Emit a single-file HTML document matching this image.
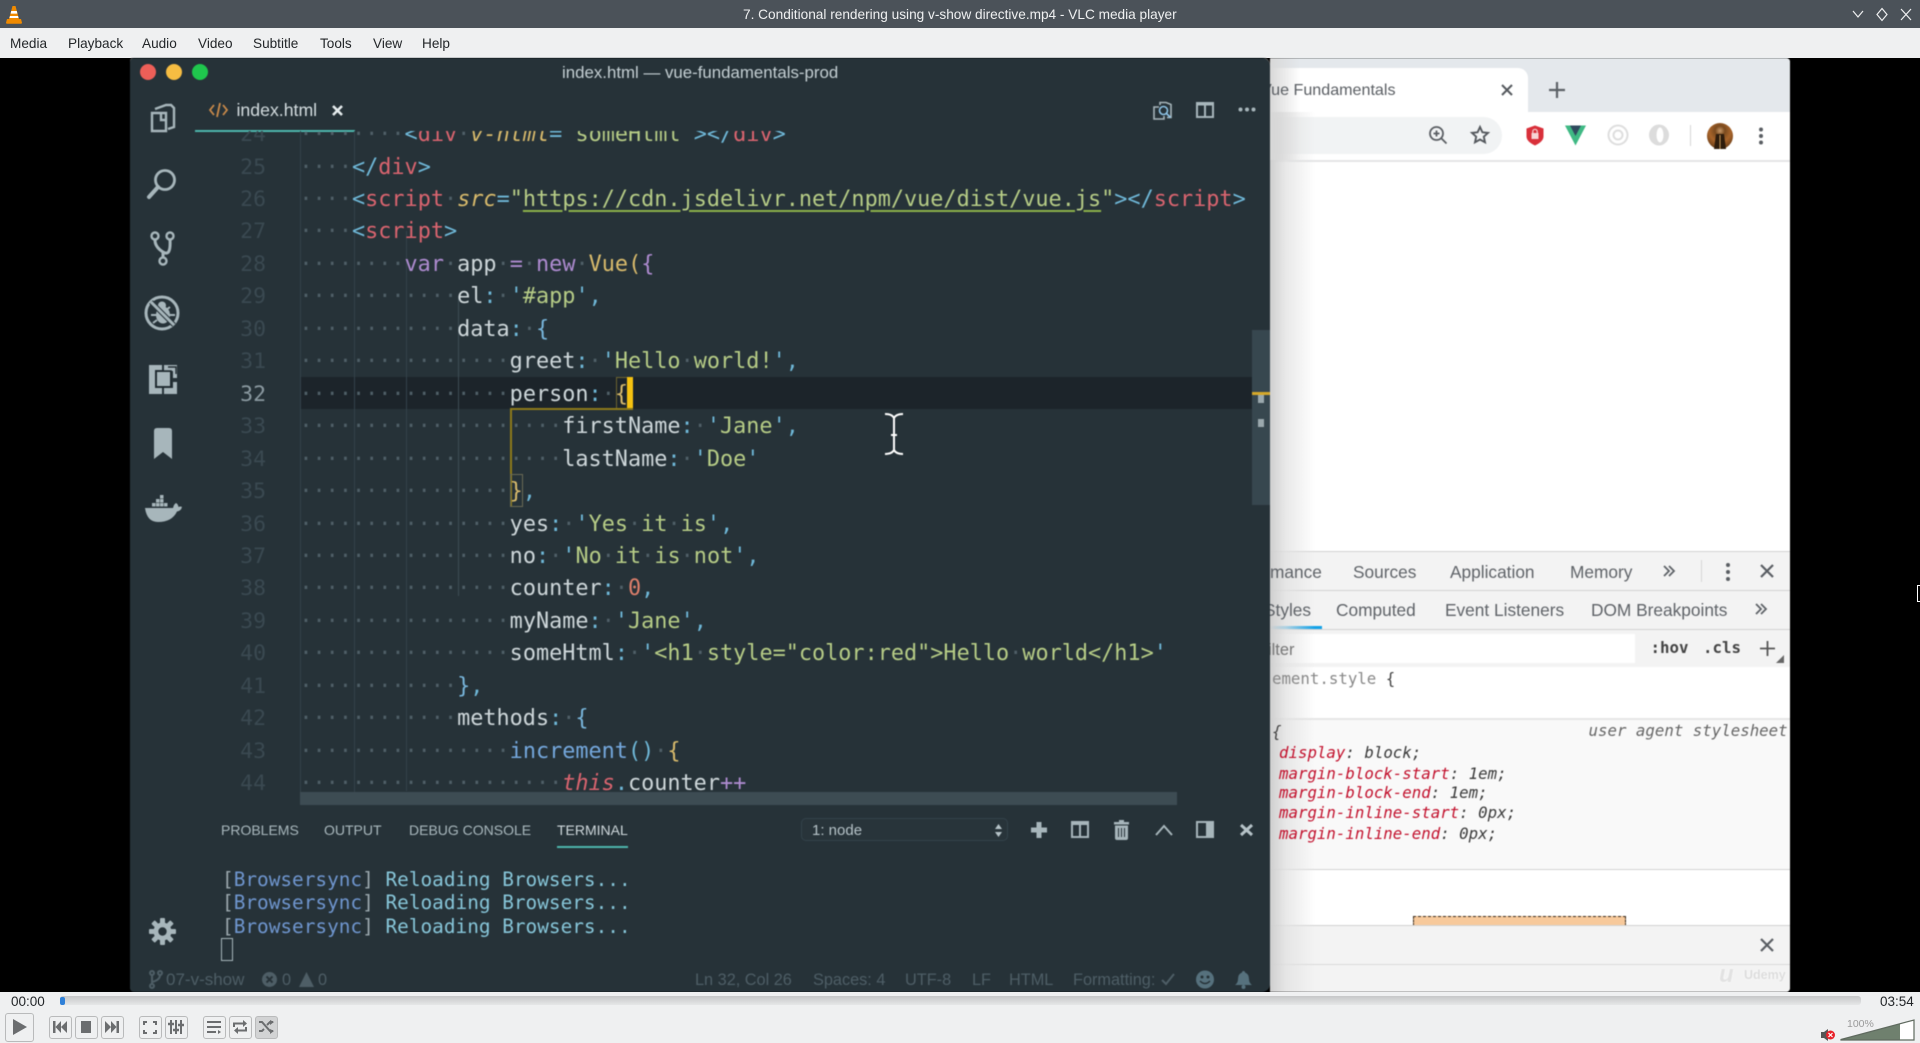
<!DOCTYPE html>
<html lang="en"><head><meta charset="utf-8"><title>VLC</title>
<style>
html,body{margin:0;padding:0;width:1920px;height:1043px;overflow:hidden;background:#000}
*{box-sizing:border-box}
.a{position:absolute}
.t{position:absolute;white-space:nowrap;line-height:20px;font-family:"Liberation Sans",sans-serif}
svg{position:absolute;overflow:visible}
#blur{position:absolute;left:130px;top:58px;width:1660px;height:934px;overflow:hidden;filter:blur(.45px)}
#code{position:absolute;left:169.4px;top:-11.9px;margin:0;font:21.84px/32.45px "DejaVu Sans Mono",monospace;color:#ced7da;white-space:pre}
#nums{position:absolute;left:61px;width:75px;top:-11.9px;margin:0;font:21.48px/32.45px "DejaVu Sans Mono",monospace;color:#3a4951;text-align:right;white-space:pre}
#code i{font-style:normal;color:#4f5f67}
.p{color:#6fb8d8}.n{color:#d9646f}.s{color:#b6cc86}.y{color:#d9bb6c}.k{color:#ae8bd0}.f{color:#74a7dc}.b{color:#78b6dc}.o{color:#de7f6b}
.it{font-style:italic}
.d{font-family:"DejaVu Sans Mono",monospace;font-style:italic;font-size:15.75px;line-height:20px;position:absolute;white-space:pre;color:#3a3a3a}
.d b{font-weight:normal;color:#c2102c}
.btn{position:absolute;top:1016px;width:23px;height:23px;border:1px solid #b9babb;border-radius:3px;background:#eff0f1}
.m{font-size:13.6px;color:#232629;top:34px}
.st{font-size:16.3px;color:#4e5e66;top:969.5px}
.dv{font-size:17.3px;color:#5f6368}
.tb{font-size:14px;color:#a9b8bd;top:820px}
</style></head>
<body>
<!-- VLC chrome -->
<div class="a" style="left:0;top:0;width:1920px;height:28px;background:#4b5259"></div>
<svg style="left:5px;top:5px" width="18" height="20" viewBox="0 0 18 20"><path d="M7.5 1h3l3.5 13h-10z" fill="#f08a00"/><path d="M6.2 6h5.6l.6 2.6H5.600zM5 11h8l.6 2H4.400z" fill="#fff"/><path d="M2 14h14l1 3.800q0 1-1 1H2q-1 0-1-1z" fill="#f08a00"/></svg>
<div class="t" style="left:743px;top:4.5px;font-size:13.65px;color:#eff0f1">7. Conditional rendering using v-show directive.mp4 - VLC media player</div>
<svg style="left:1850px;top:6px" width="66" height="17" viewBox="0 0 66 17" fill="none" stroke="#eff0f1" stroke-width="1.200"><path d="M3 5l5 6 5-6"/><path d="M32 2.500l5 6-5 6-5-6z"/><path d="M51 3l10 11M61 3L51 14"/></svg>
<div class="a" style="left:0;top:28px;width:1920px;height:30px;background:#eff0f1"></div>
<div class="t m" style="left:10px">Media</div><div class="t m" style="left:68px">Playback</div><div class="t m" style="left:142px">Audio</div><div class="t m" style="left:198px">Video</div><div class="t m" style="left:253px">Subtitle</div><div class="t m" style="left:320px">Tools</div><div class="t m" style="left:373px">View</div><div class="t m" style="left:422px">Help</div>

<!-- Video area -->
<div id="blur"><div class="a" style="left:-130px;top:-58px;width:1920px;height:1043px">

<!-- Browser -->
<div class="a" style="left:1270px;top:58px;width:520px;height:934px;background:#fff;border-radius:0 4px 4px 0;overflow:hidden">
 <div class="a" style="left:0;top:0;width:520px;height:54px;background:#e4e8ec"></div>
 <div class="a" style="left:-20px;top:10px;width:278px;height:44px;background:#fff;border-radius:10px 10px 0 0"></div>
 <div class="a" style="left:0;top:102px;width:520px;height:2px;background:#e4e5e6"></div>
 <div class="a" style="left:-30px;top:59px;width:262px;height:37px;background:#f1f3f4;border-radius:19px"></div>
 <div class="a" style="left:0;top:494px;width:520px;height:78px;background:#f3f3f3"></div>
 <div class="a" style="left:0;top:493px;width:520px;height:1px;background:#d2d2d2"></div>
 <div class="a" style="left:0;top:532px;width:520px;height:1px;background:#d2d2d2"></div>
 <div class="a" style="left:0;top:571px;width:520px;height:1px;background:#d2d2d2"></div>
 <div class="a" style="left:0;top:568px;width:52px;height:3px;background:#12a2e8"></div>
 <div class="a" style="left:0;top:572px;width:520px;height:37px;background:#f3f3f3"></div>
 <div class="a" style="left:0;top:576px;width:365px;height:29px;background:#fff"></div>
 <div class="a" style="left:0;top:660px;width:520px;height:2px;background:#e6e6e6"></div>
 <div class="a" style="left:0;top:662px;width:520px;height:149px;background:#f9f9f9"></div>
 <div class="a" style="left:0;top:811px;width:520px;height:1px;background:#d4d4d4"></div>
 <div class="a" style="left:143px;top:858px;width:213px;height:10px;background:#f7c99b;border:1px dashed #3a2a1a;border-bottom:0"></div>
 <div class="a" style="left:0;top:867px;width:520px;height:67px;background:#f3f3f3"></div>
 <div class="a" style="left:0;top:867px;width:520px;height:1px;background:#d2d2d2"></div>
 <div class="a" style="left:0;top:906px;width:520px;height:1px;background:#d9d9d9"></div>
 <div class="a" style="left:0;top:54px;width:45px;height:880px;background:linear-gradient(90deg,#cfcfcf 0,rgba(225,225,225,.75) 35%,rgba(255,255,255,0) 100%)"></div>
 <div class="a" style="left:0;top:0;width:30px;height:102px;background:linear-gradient(90deg,#d8d8d8,rgba(255,255,255,0))"></div>
</div>

<div class="t" style="left:1261px;top:80px;font-size:16.1px;color:#5a5e63;clip-path:inset(0 0 0 9px)">Vue Fundamentals</div>
<svg style="left:1500px;top:83px" width="14" height="14" fill="none" stroke="#55595e" stroke-width="2"><path d="M2 2l10 10M12 2L2 12"/></svg>
<svg style="left:1549px;top:82px" width="16" height="16" fill="none" stroke="#5c6166" stroke-width="2.200"><path d="M8 0v16M0 8h16"/></svg>
<svg style="left:1428px;top:125px" width="20" height="20" fill="none" stroke="#5a5e63" stroke-width="1.800"><circle cx="8.500" cy="8.500" r="6.500"/><path d="M13.500 13.500l5 5M8.500 5.500v6M5.500 8.500h6"/></svg>
<svg style="left:1470px;top:125px" width="20" height="20" fill="none" stroke="#55595e" stroke-width="1.900"><path d="M10 2l2.400 5.300 5.600.6-4.200 3.800 1.200 5.600L10 14.500l-5 2.800 1.200-5.600L2 7.900l5.600-.6z"/></svg>
<svg style="left:1526px;top:125px" width="18" height="21"><path d="M9 .5l8.500 3v8q0 5-8.500 9-8.500-4-8.500-9v-8z" fill="#d9303a"/><rect x="5.500" y="8" width="7" height="6" fill="#f6d5d5"/><path d="M6.800 8V6.500a2.200 2.200 0 014.400 0V8" fill="none" stroke="#f6d5d5" stroke-width="1.200"/></svg>
<svg style="left:1565px;top:125px" width="22" height="21"><path d="M0 .5h21L10.500 20.500z" fill="#3fb984"/><path d="M5 .5h11l-5.500 10.500z" fill="#2f4a5e"/></svg>
<svg style="left:1607px;top:123px" width="22" height="23" fill="none" stroke="#dedede" stroke-width="2"><circle cx="11" cy="12" r="9.500"/><circle cx="11" cy="12" r="4.500"/></svg>
<svg style="left:1648px;top:123px" width="22" height="23"><ellipse cx="11" cy="12" rx="10" ry="10.500" fill="#dcdcdc"/><ellipse cx="12" cy="12" rx="3.500" ry="7.500" fill="#fff"/></svg>
<div class="a" style="left:1690px;top:125px;width:1px;height:21px;background:#d6d6d6"></div>
<div class="a" style="left:1707px;top:123px;width:26px;height:26px;border-radius:50%;background:radial-gradient(circle at 50% 30%,#c89a6a 0,#7a4a1e 22%,#a8642a 48%,#4a2a0e 100%)"></div>
<svg style="left:1711px;top:134px" width="18" height="15"><path d="M5 0h8l2 15H3z" fill="#2e1c0c"/><path d="M9 1v14" stroke="#c89a5a" stroke-width="1"/></svg>
<svg style="left:1758px;top:127px" width="6" height="18" fill="#5a5e63"><circle cx="3" cy="2.500" r="2"/><circle cx="3" cy="9" r="2"/><circle cx="3" cy="15.500" r="2"/></svg>

<!-- devtools text -->
<div class="t dv" style="left:1270px;top:562px">mance</div>
<div class="t dv" style="left:1353px;top:562px">Sources</div><div class="t dv" style="left:1450px;top:562px">Application</div><div class="t dv" style="left:1570px;top:562px">Memory</div>
<svg style="left:1663px;top:565px" width="12" height="12" fill="none" stroke="#5f6368" stroke-width="1.800"><path d="M1 1l5 5-5 5M6 1l5 5-5 5"/></svg>
<div class="a" style="left:1701px;top:560px;width:1px;height:22px;background:#d6d6d6"></div>
<svg style="left:1725px;top:562px" width="6" height="20" fill="#5a5e63"><circle cx="3" cy="3" r="2"/><circle cx="3" cy="10" r="2"/><circle cx="3" cy="17" r="2"/></svg>
<svg style="left:1760px;top:564px" width="14" height="14" fill="none" stroke="#5a5e63" stroke-width="2.200"><path d="M1 1l12 12M13 1L1 13"/></svg>
<div class="t dv" style="left:1264px;top:600px;clip-path:inset(0 0 0 6px)">Styles</div><div class="t dv" style="left:1336px;top:600px">Computed</div><div class="t dv" style="left:1445px;top:600px">Event Listeners</div><div class="t dv" style="left:1591px;top:600px">DOM Breakpoints</div>
<svg style="left:1755px;top:603px" width="12" height="12" fill="none" stroke="#5f6368" stroke-width="1.800"><path d="M1 1l5 5-5 5M6 1l5 5-5 5"/></svg>
<div class="t" style="left:1258px;top:640px;font-size:16.4px;color:#777;clip-path:inset(0 0 0 12px)">Filter</div>
<div class="t" style="left:1650.5px;top:638px;font-size:15.75px;font-weight:bold;color:#444;font-family:'DejaVu Sans Mono',monospace">:hov</div>
<div class="t" style="left:1703px;top:638px;font-size:15.75px;font-weight:bold;color:#444;font-family:'DejaVu Sans Mono',monospace">.cls</div>
<svg style="left:1760px;top:641px" width="15" height="15" stroke="#555" stroke-width="1.800"><path d="M7.500 0v15M0 7.500h15"/></svg>
<svg style="left:1776px;top:655px" width="8" height="8" fill="#666"><path d="M8 0v8H0z"/></svg>
<div class="d" style="left:1253px;top:669px;font-style:normal;color:#888;clip-path:inset(0 0 0 18px)">element.style <span style="color:#444">{</span></div>
<div class="d" style="left:1272px;top:722px;color:#444">{</div>
<div class="d" style="left:1588.5px;top:721px;color:#666">user agent stylesheet</div>
<div class="d" style="left:1279px;top:743px"><b>display</b>: block;</div>
<div class="d" style="left:1279px;top:764px"><b>margin-block-start</b>: 1em;</div>
<div class="d" style="left:1279px;top:783px"><b>margin-block-end</b>: 1em;</div>
<div class="d" style="left:1279px;top:803px"><b>margin-inline-start</b>: 0px;</div>
<div class="d" style="left:1279px;top:824px"><b>margin-inline-end</b>: 0px;</div>
<svg style="left:1760px;top:938px" width="14" height="14" fill="none" stroke="#5a5e63" stroke-width="2.200"><path d="M1 1l12 12M13 1L1 13"/></svg>
<div class="t" style="left:1719px;top:965px;font-size:24px;font-weight:bold;font-style:italic;color:#e2e2e2;text-shadow:0 0 2px #fff">u</div>
<div class="t" style="left:1744px;top:965px;font-size:12.5px;font-weight:bold;color:#dcdcdc;text-shadow:0 0 2px #fff">Udemy</div>

<!-- VS Code -->
<div class="a" style="left:130px;top:58px;width:1140px;height:934px;background:#263238;border-radius:4px 8px 8px 4px;box-shadow:0 -1px 0 #666"></div>
<div class="a" style="left:140px;top:64px;width:16px;height:16px;border-radius:50%;background:#ed5f58"></div>
<div class="a" style="left:166px;top:64px;width:16px;height:16px;border-radius:50%;background:#f6bd42"></div>
<div class="a" style="left:192px;top:64px;width:16px;height:16px;border-radius:50%;background:#1fc74d"></div>
<div class="t" style="left:562px;top:62.500px;font-size:16.85px;color:#c4cfd3">index.html — vue-fundamentals-prod</div>

<!-- activity icons -->
<svg style="left:150px;top:102px" width="26" height="32" fill="none" stroke="#a7b6bb" stroke-width="2.400"><path d="M2 11h14l0 0v18H2z"/><path d="M5 7l11-4h5l3 3v19l-6 2"/><path d="M11 11v7h6"/></svg>
<svg style="left:147px;top:167px" width="32" height="32" fill="none" stroke="#a7b6bb"><circle cx="18" cy="13" r="9.500" stroke-width="2.800"/><path d="M11 20l-9 10" stroke-width="4" stroke-linecap="round"/></svg>
<svg style="left:150px;top:231px" width="26" height="35" fill="none" stroke="#a7b6bb" stroke-width="2.400"><circle cx="5" cy="5" r="3.500"/><circle cx="20" cy="5" r="3.500"/><circle cx="13" cy="30" r="3.500"/><path d="M5 9q0 7 8 12t7-12M13 21v5" stroke-width="3"/></svg>
<svg style="left:144px;top:295px" width="37" height="37" fill="none" stroke="#a7b6bb"><circle cx="18" cy="18" r="16" stroke-width="3"/><ellipse cx="19" cy="20" rx="7" ry="8.500" fill="#a7b6bb" stroke="none"/><circle cx="18" cy="10.500" r="4" fill="#a7b6bb" stroke="none"/><path d="M10 12l4 3M26 12l-4 3M7 20h5M31 20h-5M9 28l4-3M28 28l-4-3" stroke-width="2"/><path d="M7 7l23 23" stroke="#263238" stroke-width="5"/><path d="M7 7l23 23" stroke-width="3"/></svg>
<svg style="left:149px;top:365px" width="28" height="29"><path d="M0 0h13v5H6v18h7v6H0zM15 0h13v13h-4V6h-6l0 0h-3zM15 23h9v-6h4v12H15z" fill="#a7b6bb"/><rect x="8" y="7" width="13" height="14" fill="#a7b6bb"/><path d="M7 6h15v16H7z" fill="none" stroke="#1f2a2f" stroke-width="1.600"/><path d="M19 2h8v7" fill="none" stroke="#1f2a2f" stroke-width="1.400"/></svg>
<svg style="left:154px;top:428px" width="18" height="32"><path d="M0 3q0-3 3-3h12q3 0 3 3v28l-9-7-9 7z" fill="#a7b6bb"/></svg>
<svg style="left:144px;top:494px" width="38" height="29" fill="#a7b6bb"><path d="M1 14h28q1-4 3-5 2 1 2.500 4 2-1 3.500 0-1 4-5 4.500Q28 28 14 28 3 28 1 14z"/><path d="M8 9h3.500v3.500H8zM12 9h3.500v3.500H12zM16 9h3.500v3.500H16zM12 5h3.500v3.500H12zM16 5h3.500v3.500H16zM16 1h3.500v3.500H16zM20 9h3.500v3.500H20z"/></svg>
<svg style="left:149px;top:918px" width="27" height="27" viewBox="0 0 27 27"><g fill="#a7b6bb"><circle cx="13.500" cy="13.500" r="9"/><rect x="11" y="0" width="5" height="27" rx="1"/><rect x="11" y="0" width="5" height="27" rx="1" transform="rotate(45 13.500 13.500)"/><rect x="11" y="0" width="5" height="27" rx="1" transform="rotate(90 13.500 13.500)"/><rect x="11" y="0" width="5" height="27" rx="1" transform="rotate(135 13.500 13.500)"/></g><circle cx="13.500" cy="13.500" r="4.200" fill="#263238"/></svg>

<!-- tab -->
<svg style="left:209px;top:102px" width="19" height="16" fill="none" stroke="#c98a4a" stroke-width="1.800"><path d="M5 3L1 8l4 5M14 3l4 5-4 5M11 1L8 15"/></svg>
<div class="t" style="left:236.500px;top:100px;font-size:17.700px;color:#d3dcdf">index.html</div>
<svg style="left:332px;top:105px" width="11" height="11" fill="none" stroke="#e6ecee" stroke-width="2.600"><path d="M1 1l9 9M10 1L1 10"/></svg>
<div class="a" style="left:195px;top:130px;width:160px;height:2px;background:#4db6ac"></div>
<svg style="left:1153px;top:101px" width="21" height="19" fill="none" stroke="#a7b6bb" stroke-width="1.600"><path d="M7 4V1.500h6l5 2v13h-4M6 6H1v12h10v-3"/><circle cx="10.500" cy="9.500" r="4" stroke="#8ec4e6"/><path d="M13.500 12.500l4 4" stroke="#8ec4e6"/></svg>
<svg style="left:1196px;top:102px" width="18" height="16" fill="none" stroke="#a7b6bb" stroke-width="2"><rect x="1" y="1" width="16" height="14"/><path d="M9 1v14M1 2.500h16" /></svg>
<svg style="left:1238px;top:107px" width="18" height="5" fill="#a7b6bb"><circle cx="2.500" cy="2.500" r="2"/><circle cx="9" cy="2.500" r="2"/><circle cx="15.500" cy="2.500" r="2"/></svg>

<!-- editor -->
<div class="a" style="left:130px;top:131px;width:1140px;height:661px;overflow:hidden">
 <div class="a" style="left:170px;top:246px;width:952px;height:32px;background:#1c242a"></div>
 <div class="a" style="left:170px;top:0;width:1px;height:661px;background:#33424a"></div>
 <div class="a" style="left:224px;top:0;width:1px;height:100%;background:#33424a"></div>
 <div class="a" style="left:276px;top:100px;width:1px;height:560px;background:#33424a"></div>
 <div class="a" style="left:328px;top:165px;width:1px;height:300px;background:#3d4c54"></div>
 <pre id="nums">24
25
26
27
28
29
30
31
<span style="color:#8b9aa1">32</span>
33
34
35
36
37
38
39
40
41
42
43
44</pre>
 <pre id="code"><i>········</i><span class="p">&lt;</span><span class="n">div</span><i>·</i><span class="y it">v-html</span><span class="p">=</span><span class="s">"someHtml"</span><span class="p">&gt;&lt;/</span><span class="n">div</span><span class="p">&gt;</span>
<i>····</i><span class="p">&lt;/</span><span class="n">div</span><span class="p">&gt;</span>
<i>····</i><span class="p">&lt;</span><span class="n">script</span><i>·</i><span class="y it">src</span><span class="p">=</span><span class="s">"<span style="text-decoration:underline;text-decoration-color:#8bb04a;text-underline-offset:4px;text-decoration-thickness:2px">https://cdn.jsdelivr.net/npm/vue/dist/vue.js</span>"</span><span class="p">&gt;&lt;/</span><span class="n">script</span><span class="p">&gt;</span>
<i>····</i><span class="p">&lt;</span><span class="n">script</span><span class="p">&gt;</span>
<i>········</i><span class="k">var</span><i>·</i>app<i>·</i><span class="k">=</span><i>·</i><span class="k">new</span><i>·</i><span class="y">Vue</span><span class="y">(</span><span class="k">{</span>
<i>············</i>el<span class="p">:</span><i>·</i><span class="p">'</span><span class="s">#app</span><span class="p">',</span>
<i>············</i>data<span class="p">:</span><i>·</i><span class="b">{</span>
<i>················</i>greet<span class="p">:</span><i>·</i><span class="p">'</span><span class="s">Hello<i>·</i>world!</span><span class="p">',</span>
<i>················</i>person<span class="p">:</span><i>·</i><span class="y">{</span>
<i>····················</i>firstName<span class="p">:</span><i>·</i><span class="p">'</span><span class="s">Jane</span><span class="p">',</span>
<i>····················</i>lastName<span class="p">:</span><i>·</i><span class="p">'</span><span class="s">Doe</span><span class="p">'</span>
<i>················</i><span class="y">}</span><span class="p">,</span>
<i>················</i>yes<span class="p">:</span><i>·</i><span class="p">'</span><span class="s">Yes<i>·</i>it<i>·</i>is</span><span class="p">',</span>
<i>················</i>no<span class="p">:</span><i>·</i><span class="p">'</span><span class="s">No<i>·</i>it<i>·</i>is<i>·</i>not</span><span class="p">',</span>
<i>················</i>counter<span class="p">:</span><i>·</i><span class="o">0</span><span class="p">,</span>
<i>················</i>myName<span class="p">:</span><i>·</i><span class="p">'</span><span class="s">Jane</span><span class="p">',</span>
<i>················</i>someHtml<span class="p">:</span><i>·</i><span class="p">'</span><span class="s">&lt;h1<i>·</i>style="color:red"&gt;Hello<i>·</i>world&lt;/h1&gt;</span><span class="p">'</span>
<i>············</i><span class="b">}</span><span class="p">,</span>
<i>············</i>methods<span class="p">:</span><i>·</i><span class="b">{</span>
<i>················</i><span class="f">increment</span><span class="p">()</span><i>·</i><span class="y">{</span>
<i>····················</i><span class="n it">this</span><span class="p">.</span>counter<span class="k">++</span></pre>
 <!-- bracket highlights -->
 <div class="a" style="left:485.500px;top:246px;width:12px;height:32px;border:1px solid #6d6430"></div>
 <div class="a" style="left:497px;top:246px;width:6px;height:32px;background:#f5c211"></div>
 <div class="a" style="left:380px;top:277px;width:123px;height:2px;background:#8d7a1a"></div>
 <div class="a" style="left:380px;top:277px;width:1.500px;height:98px;background:#8d7a1a"></div>
 <div class="a" style="left:380px;top:343px;width:13px;height:33px;border:1px solid #6a6a55"></div>
 <!-- scrollbars -->
 <div class="a" style="left:1122px;top:199px;width:18px;height:175px;background:#37474f"></div>
 <div class="a" style="left:1122px;top:261px;width:18px;height:3px;background:#d4a82a"></div>
 <div class="a" style="left:1128px;top:264px;width:6px;height:8px;background:#9aa8ad"></div>
 <div class="a" style="left:1128px;top:288px;width:6px;height:8px;background:#9aa8ad"></div>
</div>
<div class="a" style="left:300px;top:792px;width:877px;height:13px;background:#3d4c53"></div>

<!-- I beam -->
<svg style="left:885px;top:413px" width="18" height="42" fill="none" stroke="#fff" stroke-width="2"><path d="M0 1q7 0 9 4 2-4 9-4M9 5v32M0 41q7 0 9-4 2 4 9 4M6 22h6"/></svg>

<!-- panel -->
<div class="t tb" style="left:221px">PROBLEMS</div><div class="t tb" style="left:324px">OUTPUT</div><div class="t tb" style="left:409px">DEBUG CONSOLE</div><div class="t tb" style="left:557px;color:#cfd8dc">TERMINAL</div>
<div class="a" style="left:557px;top:846px;width:71px;height:2px;background:#4db6ac"></div>
<div class="a" style="left:801px;top:818px;width:207px;height:23px;border:1px solid #33424a;border-radius:5px;background:#28343a"></div>
<div class="t" style="left:812px;top:820.5px;font-size:15px;color:#b6c3c8">1: node</div>
<svg style="left:994px;top:824px" width="9" height="13" fill="#b6c3c8"><path d="M4.500 0L8 5H1zM4.500 13L1 8h7z"/></svg>
<svg style="left:1031px;top:822px" width="16" height="16" fill="#a7b6bb"><path d="M5.500 0h5v5.500H16v5h-5.500V16h-5v-5.500H0v-5h5.500z"/></svg>
<svg style="left:1071px;top:821px" width="18" height="17" fill="none" stroke="#a7b6bb" stroke-width="2"><rect x="1" y="1" width="16" height="15"/><path d="M9 1v15M1 3h16"/></svg>
<svg style="left:1114px;top:820px" width="15" height="20" fill="#a7b6bb"><path d="M5 0h5v2h5v2.500H0V2h5zM1 5.500h13V18q0 2-2 2H3q-2 0-2-2z"/><path d="M4.500 8v9M7.500 8v9M10.500 8v9" stroke="#263238" stroke-width="1"/></svg>
<svg style="left:1155px;top:824px" width="18" height="12" fill="none" stroke="#a7b6bb" stroke-width="2"><path d="M1 11l8-9 8 9"/></svg>
<svg style="left:1196px;top:821px" width="18" height="17"><rect x="1" y="1" width="16" height="15" fill="none" stroke="#a7b6bb" stroke-width="2"/><rect x="10" y="1" width="7" height="15" fill="#a7b6bb"/></svg>
<svg style="left:1240px;top:824px" width="13" height="12" fill="none" stroke="#b6c3c8" stroke-width="3"><path d="M1 1l11 10M12 1L1 11"/></svg>
<pre class="a" style="left:222px;top:867.5px;margin:0;font:19.4px/23.5px 'DejaVu Sans Mono',monospace;color:#87c6d9;white-space:pre"><span style="color:#9aa7ad">[</span><span style="color:#6f96cf">Browsersync</span><span style="color:#9aa7ad">]</span> Reloading Browsers...
<span style="color:#9aa7ad">[</span><span style="color:#6f96cf">Browsersync</span><span style="color:#9aa7ad">]</span> Reloading Browsers...
<span style="color:#9aa7ad">[</span><span style="color:#6f96cf">Browsersync</span><span style="color:#9aa7ad">]</span> Reloading Browsers...</pre>
<div class="a" style="left:221px;top:938px;width:12px;height:23px;border:1.500px solid #a7b6bb"></div>

<!-- status -->
<svg style="left:149px;top:970px" width="13" height="19" fill="none" stroke="#4e5e66" stroke-width="2"><circle cx="3" cy="3" r="2"/><circle cx="3" cy="16" r="2"/><circle cx="11" cy="3" r="2"/><path d="M3 5v9M11 5q0 5-8 7"/></svg>
<div class="t st" style="left:166px;font-size:17px">07-v-show</div>
<svg style="left:262px;top:972px" width="15" height="15"><circle cx="7.500" cy="7.500" r="7.500" fill="#4e5e66"/><path d="M4.500 4.500l6 6M10.500 4.500l-6 6" stroke="#263238" stroke-width="2"/></svg>
<div class="t st" style="left:282px">0</div>
<svg style="left:299px;top:972px" width="15" height="15"><path d="M7.500 0L15 15H0z" fill="#4e5e66"/></svg>
<div class="t st" style="left:318px">0</div>
<div class="t st" style="left:695px">Ln 32, Col 26</div><div class="t st" style="left:813px">Spaces: 4</div><div class="t st" style="left:905px">UTF-8</div><div class="t st" style="left:972px">LF</div><div class="t st" style="left:1009px">HTML</div><div class="t st" style="left:1073px">Formatting:</div>
<svg style="left:1161px;top:973px" width="14" height="13" fill="none" stroke="#4e5e66" stroke-width="2"><path d="M1 7l4 4 8-10"/></svg>
<svg style="left:1196px;top:970px" width="18" height="19"><circle cx="9" cy="9.500" r="9" fill="#56717d"/><circle cx="6" cy="7" r="1.500" fill="#263238"/><circle cx="12" cy="7" r="1.500" fill="#263238"/><path d="M4 11q5 5 10 0" fill="none" stroke="#263238" stroke-width="1.500"/></svg>
<svg style="left:1235px;top:971px" width="17" height="18" fill="#56717d"><path d="M8.500 0q1.500 0 1.500 1.500Q14 3 14 8q0 4 3 6H0q3-2 3-6 0-5 4-6.500Q7 0 8.500 0z"/><circle cx="8.500" cy="16" r="2"/></svg>
</div></div>

<!-- right edge mouse sliver -->
<div class="a" style="left:1917px;top:585px;width:3px;height:17px;border:1px solid #fff;border-right:0"></div>

<!-- bottom controls -->
<div class="a" style="left:0;top:992px;width:1920px;height:51px;background:#eff0f1"></div>
<div class="t" style="left:11px;top:992px;font-size:13.500px;color:#232629">00:00</div>
<div class="t" style="left:1880px;top:992px;font-size:13.500px;color:#232629">03:54</div>
<div class="a" style="left:60px;top:996px;width:1801px;height:9px;border-radius:3px;background:linear-gradient(180deg,#c6c7c8,#e6e7e8)"></div>
<div class="a" style="left:60px;top:997px;width:5px;height:8px;border-radius:2px;background:#2f80d8"></div>

<div class="a" style="left:5px;top:1012.500px;width:29px;height:29px;border:1px solid #b9babb;border-radius:3px;background:#eff0f1"></div>
<svg style="left:12px;top:1018px" width="16" height="18" fill="#6b6d6f"><path d="M1 1l14 8-14 8z"/></svg>
<div class="btn" style="left:48.500px"></div><div class="btn" style="left:74.500px"></div><div class="btn" style="left:100.500px"></div>
<div class="btn" style="left:138.500px"></div><div class="btn" style="left:164.500px"></div>
<div class="btn" style="left:202.500px"></div><div class="btn" style="left:228.500px"></div><div class="btn" style="left:254.500px;background:#d2d3d4"></div>
<svg style="left:53px;top:1021px" width="14" height="12" fill="#6b6d6f"><path d="M0 0h2.500v12H0zM8 0v12L2.500 6zM14 0v12L8 6z"/></svg>
<svg style="left:81px;top:1021px" width="10" height="12" fill="#6b6d6f"><rect width="10" height="12"/></svg>
<svg style="left:105px;top:1021px" width="14" height="12" fill="#6b6d6f"><path d="M14 0h-2.500v12H14zM6 0v12l5.500-6zM0 0v12l6-6z"/></svg>
<svg style="left:143px;top:1021px" width="14" height="13" fill="none" stroke="#6b6d6f" stroke-width="2"><path d="M1 4V1h3M10 1h3v3M13 9v3h-3M4 12H1V9"/></svg>
<svg style="left:168px;top:1019px" width="16" height="16" fill="none" stroke="#6b6d6f" stroke-width="2"><path d="M3 1v14M8 1v14M13 1v14"/><path d="M0 5h6M5 11h6M10 6h6" stroke-width="2.500"/></svg>
<svg style="left:207px;top:1020px" width="15" height="14" stroke="#6b6d6f" stroke-width="2" fill="#6b6d6f"><path d="M0 2h14M0 7h14M0 12h9"/><path d="M11 10l3 2-3 2z" stroke="none"/></svg>
<svg style="left:233px;top:1020px" width="15" height="14" fill="none" stroke="#6b6d6f" stroke-width="2"><path d="M1 7V3.500h11M13 7v3.500H2"/><path d="M10 0l4 3.500-4 3.500zM5 7l-4 3.500L5 14z" fill="#6b6d6f" stroke="none"/></svg>
<svg style="left:259px;top:1020px" width="15" height="14" fill="none" stroke="#6b6d6f" stroke-width="2"><path d="M0 2h3l8 9h3M0 11l3 0 2-2M8 5l3-3h3"/><path d="M11 0l4 2-4 3zM11 9l4 2-4 3z" fill="#6b6d6f" stroke="none"/></svg>

<svg style="left:1821px;top:1029px" width="14" height="12"><path d="M0 3h3l4-3v12l-4-3H0z" fill="#555"/><circle cx="9.500" cy="6" r="4.500" fill="#e8222a"/><path d="M7.500 4l4 4M11.500 4l-4 4" stroke="#fff" stroke-width="1.200"/></svg>
<svg style="left:1840px;top:1019px" width="75" height="22"><path d="M1 20.500L74 1v20H1z" fill="#fff"/><path d="M1 20.500L60 4.800V21H1z" fill="#6f806e"/><path d="M1 20.500L74 1v20H1z" fill="none" stroke="#5f6a5f" stroke-width="1.200"/></svg>
<div class="t" style="left:1847px;top:1014px;font-size:10.500px;color:#9a9a9a">100%</div>
</body></html>
